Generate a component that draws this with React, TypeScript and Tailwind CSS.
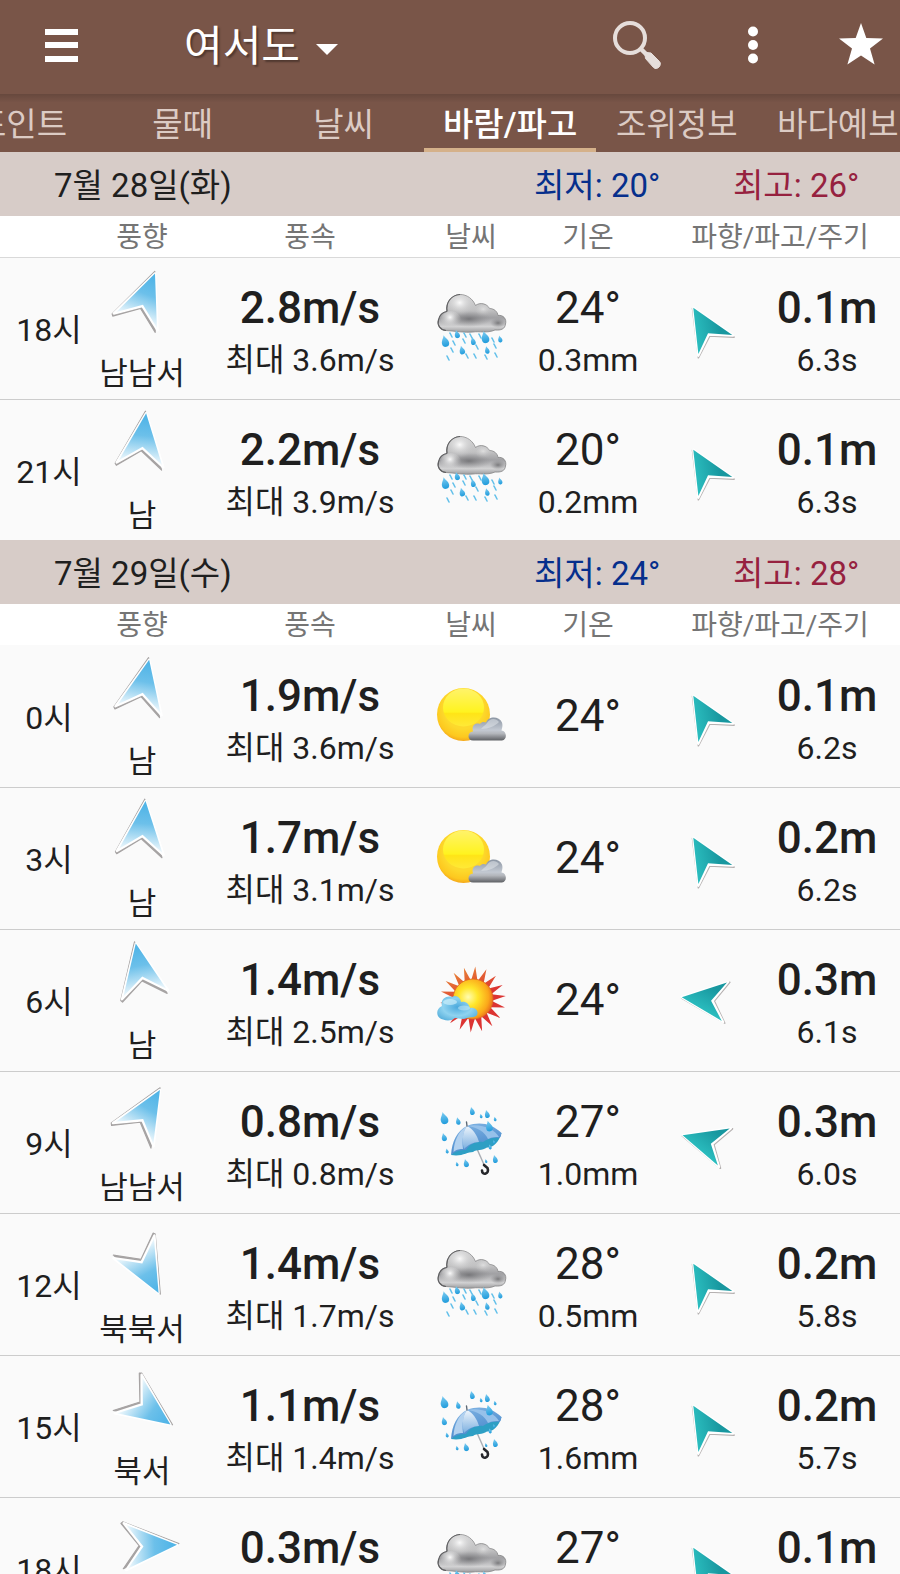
import React from "react";
import clsx from "clsx";

type Weather = "rain" | "sunCloud" | "sunny" | "umbrella";

type Forecast = {
  hour: number;
  windAngle: number;
  windDir: string;
  speed: string;
  gust: string;
  weather: Weather;
  temp: number;
  rain?: string;
  waveAngle: number;
  wave: string;
  period: string;
};

type Day = { date: string; min: number; max: number; rows: Forecast[] };

const tabs = ["포인트", "물때", "날씨", "바람/파고", "조위정보", "바다예보"];

const days: Day[] = [
  {
    date: "7월 28일(화)",
    min: 20,
    max: 26,
    rows: [
      { hour: 18, windAngle: 21, windDir: "남남서", speed: "2.8", gust: "3.6", weather: "rain", temp: 24, rain: "0.3", waveAngle: -30, wave: "0.1", period: "6.3" },
      { hour: 21, windAngle: 6, windDir: "남", speed: "2.2", gust: "3.9", weather: "rain", temp: 20, rain: "0.2", waveAngle: -30, wave: "0.1", period: "6.3" },
    ],
  },
  {
    date: "7월 29일(수)",
    min: 24,
    max: 28,
    rows: [
      { hour: 0, windAngle: 11, windDir: "남", speed: "1.9", gust: "3.6", weather: "sunCloud", temp: 24, waveAngle: -30, wave: "0.1", period: "6.2" },
      { hour: 3, windAngle: 5, windDir: "남", speed: "1.7", gust: "3.1", weather: "sunCloud", temp: 24, waveAngle: -30, wave: "0.2", period: "6.2" },
      { hour: 6, windAngle: -11, windDir: "남", speed: "1.4", gust: "2.5", weather: "sunny", temp: 24, waveAngle: -83, wave: "0.3", period: "6.1" },
      { hour: 9, windAngle: 30, windDir: "남남서", speed: "0.8", gust: "0.8", weather: "umbrella", temp: 27, rain: "1.0", waveAngle: -73, wave: "0.3", period: "6.0" },
      { hour: 12, windAngle: 151, windDir: "북북서", speed: "1.4", gust: "1.7", weather: "rain", temp: 28, rain: "0.5", waveAngle: -30, wave: "0.2", period: "5.8" },
      { hour: 15, windAngle: 125, windDir: "북서", speed: "1.1", gust: "1.4", weather: "umbrella", temp: 28, rain: "1.6", waveAngle: -30, wave: "0.2", period: "5.7" },
      { hour: 18, windAngle: 87, windDir: "서", speed: "0.3", gust: "0.9", weather: "rain", temp: 27, rain: "0.4", waveAngle: -30, wave: "0.1", period: "5.6" },
    ],
  },
];

// gradients shared by all the icons
const Gradients = () => (
  <svg className="absolute h-0 w-0" aria-hidden="true">
    <defs>
      <linearGradient id="wind" x1="0" y1="0" x2="0" y2="1">
        <stop offset="0.1" stopColor="#52b5e7" />
        <stop offset="0.45" stopColor="#6cc0ea" />
        <stop offset="1" stopColor="#f4fafd" />
      </linearGradient>
      <linearGradient id="wave" x1="0" y1="0.3" x2="1" y2="0.7">
        <stop offset="0.2" stopColor="#2cc0c1" />
        <stop offset="0.85" stopColor="#18979f" />
      </linearGradient>
      <linearGradient id="cloud" x1="0" y1="0" x2="0" y2="1">
        <stop offset="0" stopColor="#d4d4d5" />
        <stop offset="0.4" stopColor="#c2c2c3" />
        <stop offset="0.62" stopColor="#a0a0a3" />
        <stop offset="0.85" stopColor="#d2d2d3" />
        <stop offset="1" stopColor="#9b9b9d" />
      </linearGradient>
      <radialGradient id="puff" cx="0.45" cy="0.35" r="0.6">
        <stop offset="0" stopColor="#fafafa" />
        <stop offset="1" stopColor="#c2c2c3" stopOpacity="0" />
      </radialGradient>
      <radialGradient id="shade">
        <stop offset="0" stopColor="#68686b" />
        <stop offset="1" stopColor="#8a8a8c" stopOpacity="0" />
      </radialGradient>
      <linearGradient id="drop" x1="0" y1="0" x2="0" y2="1">
        <stop offset="0" stopColor="#7fcdf2" />
        <stop offset="1" stopColor="#1f9bdb" />
      </linearGradient>
      <radialGradient id="disc" cx="0.5" cy="0.4" r="0.62">
        <stop offset="0.6" stopColor="#fdd92c" />
        <stop offset="0.85" stopColor="#fdc81f" />
        <stop offset="1" stopColor="#f2a01a" />
      </radialGradient>
      <linearGradient id="gloss" x1="0" y1="0" x2="0" y2="1">
        <stop offset="0" stopColor="#fff36a" />
        <stop offset="0.62" stopColor="#fff31f" />
        <stop offset="0.66" stopColor="#ffe417" />
        <stop offset="1" stopColor="#ffe937" />
      </linearGradient>
      <linearGradient id="steel" x1="0" y1="0" x2="0" y2="1">
        <stop offset="0" stopColor="#8b95a3" />
        <stop offset="0.55" stopColor="#c3c9d2" />
        <stop offset="0.7" stopColor="#b3b6bb" />
        <stop offset="1" stopColor="#5e6064" />
      </linearGradient>
      <linearGradient id="ray" gradientUnits="userSpaceOnUse" x1="20" y1="0" x2="50" y2="60">
        <stop offset="0" stopColor="#ea9236" />
        <stop offset="0.6" stopColor="#dc3432" />
      </linearGradient>
      <radialGradient id="core" cx="0.38" cy="0.45" r="0.68">
        <stop offset="0" stopColor="#fffcb0" />
        <stop offset="0.35" stopColor="#ffe62b" />
        <stop offset="0.75" stopColor="#fba71a" />
        <stop offset="1" stopColor="#e35a1c" />
      </radialGradient>
      <radialGradient id="sky" cx="0.5" cy="0.45" r="0.6">
        <stop offset="0" stopColor="#4ba9dd" />
        <stop offset="0.6" stopColor="#8fd3f0" />
        <stop offset="1" stopColor="#5fb4de" />
      </radialGradient>
      <linearGradient id="canopy" x1="0" y1="0" x2="0.4" y2="1">
        <stop offset="0" stopColor="#84b6e4" />
        <stop offset="1" stopColor="#4687cb" />
      </linearGradient>
      <linearGradient id="panel" x1="0" y1="0" x2="0" y2="1">
        <stop offset="0" stopColor="#eef5fc" />
        <stop offset="1" stopColor="#7db0e0" />
      </linearGradient>
    </defs>
  </svg>
);

const WindArrow = ({ angle }: { angle: number }) => (
  <svg className="mx-auto block size-[72px] overflow-visible" viewBox="-38 -38 76 76" aria-hidden="true">
    <g transform={`rotate(${angle})`} strokeLinejoin="round">
      <path d="M-0.5 -39 L-26.5 19 L-25 21 L-0.5 3 L23 21 Z" fill="#a6a3a3" stroke="#a6a3a3" strokeWidth="1.2" />
      <path d="M0.5 -37 L-25 18 L0.5 0 L24.5 18 Z" fill="#fff" stroke="#fff" strokeWidth="2.6" />
      <path d="M0.5 -37 L-23 15.5 L0.5 -1.5 L23 16 Z" fill="url(#wind)" />
    </g>
  </svg>
);

const WaveArrow = ({ angle }: { angle: number }) => (
  <svg className="mx-auto block size-[60px] overflow-visible" viewBox="-32 -32 64 64" aria-hidden="true">
    <g transform={`rotate(${angle})`} strokeLinejoin="round">
      <path d="M-1 -25 L-22 24 L0 10 L22 24 Z" fill="#b5b1b1" stroke="#b5b1b1" strokeWidth="1.6" />
      <path d="M0 -25 L-21 22 L0 8 L22 22 Z" fill="#fff" stroke="#fff" strokeWidth="2.6" />
      <path d="M0 -25 L-20 20.5 L0 6.5 L21.5 21 Z" fill="url(#wave)" />
    </g>
  </svg>
);

const Drops = ({ items }: { items: number[][] }) => (
  <>
    {items.map(([x, y, s]) => (
      <path
        key={`${x}-${y}`}
        transform={`translate(${x} ${y}) rotate(-14) scale(${s})`}
        d="M0 -5 C1 -2 3 -1 3 2 C3 4 1.6 5 0 5 C-1.6 5 -3 4 -3 2 C-3 -1 -1 -2 0 -5 Z"
        fill="url(#drop)"
      />
    ))}
  </>
);

const Dashes = ({ items }: { items: number[][] }) => (
  <>
    {items.map(([x, y]) => (
      <path key={`${x}-${y}`} d={`M${x - 1} ${y - 2} l2 4`} stroke="#63c0ea" strokeWidth="1.6" strokeLinecap="round" />
    ))}
  </>
);

const rainCloud = "M11 38.5 C5 38 2 33 3.5 28 C4.5 23 8 20 12 19.5 C10.5 11 16 3 25 2.5 C32 2.5 38 7 40.5 13.5 C45 10 52 11.5 54.5 16.5 C59 16.5 62.5 19.5 63 23.5 C68 22.5 72 27 70.5 32 C70 37 66 38.5 60 38 C52 41.5 44 39 38 40 C30 41 20 39 11 38.5 Z";

const RainIcon = () => (
  <>
    <path d={rainCloud} fill="url(#cloud)" stroke="#858587" strokeWidth="0.8" />
    <path d="M12 19.5 C10.5 11 16 3 25 2.5 M11 38.5 C5 38 2 33 3.5 28 C4.5 23 8 20 12 19.5" fill="none" stroke="#5f5f61" strokeWidth="1.2" />
    <ellipse cx="34" cy="27" rx="22" ry="8" fill="url(#shade)" opacity="0.75" />
    <ellipse cx="63" cy="31" rx="8" ry="5" fill="url(#shade)" opacity="0.8" />
    <ellipse cx="16" cy="28" rx="10" ry="9" fill="url(#puff)" />
    <ellipse cx="26" cy="14" rx="13" ry="11" fill="url(#puff)" />
    <ellipse cx="49" cy="19" rx="8" ry="6" fill="url(#puff)" opacity="0.5" />
    <Drops items={[[10, 49, 1.2], [22, 42, 0.85], [38, 49, 0.8], [50, 45, 1.25], [65, 47, 0.7], [27, 58, 0.9], [52, 58, 0.75]]} />
    <Dashes items={[[16, 43], [30, 43], [19, 51], [29, 49], [36, 44], [58, 48], [17, 58], [13, 66], [32, 64], [42, 55], [40, 64], [51, 65], [61, 63], [60, 54], [45, 44]]} />
  </>
);

const SunCloudIcon = () => (
  <>
    <circle cx="28.5" cy="34.5" r="26.5" fill="url(#disc)" />
    <ellipse cx="28.5" cy="27.5" rx="20.5" ry="19" fill="url(#gloss)" />
    <path
      d="M38 60.5 C32 60.5 32 52 38 51.5 C36 45 41 42.5 45 44 C47 41 50 42 51 42.5 C53 36 64 35.5 67 42.5 C68 46 67 48 66.5 50.5 C72 51 72.5 60 67 60.5 Z"
      fill="url(#steel)"
    />
    <path d="M52 43 C55 38 61 38 64 42 C60 46 54 49 46 49 C48 46 50 46 52 43 Z" fill="#e6e9ee" opacity="0.5" />
  </>
);

// tips of the 18 rays, going round the disc
const rays = Array.from({ length: 18 }, (_, i) => {
  const a = ((i * 20 + 4) * Math.PI) / 180;
  const point = (r: number, t: number) => `${38 + r * Math.sin(t)} ${35.5 - r * Math.cos(t)}`;
  return `M${point(33, a)} L${point(19, a - 0.17)} L${point(19, a + 0.17)} Z`;
}).join(" ");

const SunnyIcon = () => (
  <>
    <path d={rays} fill="url(#ray)" />
    <circle cx="38" cy="35" r="20" fill="url(#core)" stroke="#df6a1d" strokeWidth="0.8" />
    <path
      d="M8 55.5 C1 54 0 45 7 42 C5 36 11 31 17 33 C21 30 26 34 26 38 C31 37 34 40 35 44 C40 43 44 47 42 51 C40 54 35 53 32 54 C28 56 24 54 20 54 C16 57 12 57 8 55.5 Z"
      fill="url(#sky)"
    />
    <ellipse cx="15" cy="38" rx="7" ry="3" fill="#c9ecf9" opacity="0.7" />
    <ellipse cx="29" cy="44" rx="6" ry="2.5" fill="#c9ecf9" opacity="0.5" />
  </>
);

const UmbrellaIcon = () => (
  <>
    <path d="M39 36 L50 61" stroke="#a9adb3" strokeWidth="1.4" />
    <path d="M49 59 L52.5 62 C55 68 47 70 47 64.500" fill="none" stroke="#26272b" strokeWidth="2.600" strokeLinecap="round" />
    <path d="M16 49 C26 37 46 29 66.500 27 C64 36 58 42 52 41.500 C47 45 42 43 38 46 C32 46 27 51 16 49 Z" fill="#2e9fc4" />
    <path d="M16 49 C17 35 22 25 32 20 C45 15 57 18 66.500 27 C66 29 66 31 64.500 32 C58 31 52 33 48 36 C40 35 34 39 31 44 C26 44 20 45 16 49 Z" fill="url(#canopy)" />
    <path d="M32 20 C23 25 19 36 18.500 46 C22 43 25 43 28 43 C27 34 28 26 32 20 Z" fill="#b2d1ef" />
    <path d="M32 20 C27 27 27 36 29 43 C33 39 38 36 44 36 C42 29 38 23 32 20 Z" fill="url(#panel)" />
    <path d="M32 20 C42 21 50 26 53 33 C57 31 61 31 64 31 C60 23 46 17 32 20 Z" fill="#96c1ea" />
    <path d="M32 20 L31.500 16" stroke="#5d6976" strokeWidth="1.400" strokeLinecap="round" />
    <Drops items={[[9, 12, 1.25], [37, 5, 0.8], [52, 8, 0.8], [23, 15, 0.75], [60, 13, 0.45], [46, 10, 0.45], [9, 31, 0.85], [54, 20, 1.1], [12, 45, 0.5], [31, 57, 0.85], [22, 58, 0.45], [60, 53, 0.8], [55, 41, 0.5], [51, 55, 0.4], [59, 36, 0.35]]} />
  </>
);

const icons: Record<Weather, { label: string; Icon: () => React.JSX.Element }> = {
  rain: { label: "비", Icon: RainIcon },
  sunCloud: { label: "구름조금", Icon: SunCloudIcon },
  sunny: { label: "맑음", Icon: SunnyIcon },
  umbrella: { label: "소나기", Icon: UmbrellaIcon },
};

const WeatherIcon = ({ type }: { type: Weather }) => {
  const { label, Icon } = icons[type];
  return (
    <svg className="mx-auto block size-[72px]" viewBox="0 0 72 72" role="img" aria-label={label}>
      <Icon />
    </svg>
  );
};

const Header = () => (
  <header className="flex h-[94px] shrink-0 items-center bg-[#795548] pr-[17px] pb-1 pl-[45px] text-white">
    <button type="button" aria-label="메뉴" className="mr-[106px]">
      <svg className="block h-[33px] w-[33px]" viewBox="0 0 33 33" fill="currentColor">
        <path d="M0 0h33v6H0z M0 13h33v6H0z M0 27h33v6H0z" />
      </svg>
    </button>
    <div className="flex items-center gap-4">
      <select
        aria-label="지역"
        className="appearance-none bg-transparent pt-1 text-[42px] leading-[60px] text-white outline-none [text-shadow:2px_2px_2px_rgb(0_0_0/0.35)]"
      >
        <option>여서도</option>
      </select>
      <svg className="pointer-events-none mt-2 block h-[11px] w-[22px]" viewBox="0 0 22 11" fill="currentColor" aria-hidden="true">
        <path d="M0 0h22L11 11z" />
      </svg>
    </div>
    <div className="ml-auto flex items-center gap-16">
      <button type="button" aria-label="검색" className="mr-1.5">
        <svg className="block size-12" viewBox="0 0 48 48" fill="none" stroke="#e6dedb" aria-hidden="true">
          <circle cx="17" cy="17" r="15" strokeWidth="4" />
          <path d="M28 28l6 6" strokeWidth="4.5" />
          <path d="M32.5 37.5 L32 33.5 L34 31.5 L38 32 L46.5 40.5 C49.5 44 44 50 40.5 46.5 Z" fill="#e6dedb" strokeWidth="1" strokeLinejoin="round" />
        </svg>
      </button>
      <button type="button" aria-label="더보기">
        <svg className="block size-11" viewBox="0 0 44 44" fill="currentColor">
          <circle cx="22" cy="8.5" r="5" />
          <circle cx="22" cy="22" r="5" />
          <circle cx="22" cy="35.5" r="5" />
        </svg>
      </button>
      <button type="button" aria-label="즐겨찾기">
        <svg className="block size-11" viewBox="0 0 44 44" fill="currentColor">
          <path d="M22 0 L27.3 15 L44 15.5 L31 25.5 L35.6 41.5 L22 32.6 L8.4 41.5 L13 25.5 L0 15.5 L16.7 15 Z" />
        </svg>
      </button>
    </div>
  </header>
);

const TabBar = () => (
  <nav className="h-[58px] shrink-0 overflow-hidden bg-[#795548] bg-linear-to-b from-black/15 to-transparent to-15%">
    <div className="-ml-[59px] flex h-full">
      {tabs.map((tab) => (
        <a
          key={tab}
          href="#"
          className={clsx(
            "flex h-full min-w-[161px] shrink-0 items-center justify-center border-b-4 px-[19px] pt-2 text-[33px] leading-10",
            tab === "바람/파고" ? "border-[#d5b18a] font-medium text-white" : "border-transparent text-[#dccbc4]"
          )}
        >
          {tab}
        </a>
      ))}
    </div>
  </nav>
);

const Value = ({ main, sub, strong }: { main: string; sub?: string; strong?: boolean }) => (
  <div className={clsx(sub && "pt-2")}>
    <div className={clsx("text-[44px] leading-[56px]", strong && "font-medium")}>{main}</div>
    {sub && <div className="text-[32px] leading-[48px]">{sub}</div>}
  </div>
);

const DaySection = ({ day, lined }: { day: Day; lined: boolean }) => (
  <section>
    <div className="flex h-16 items-center bg-[#d7ccc8] pt-1 pl-[54px] text-[33px] leading-10">
      <h2 className="flex-1">{day.date}</h2>
      <p className="w-[199px] text-[#062f8c]">최저: {day.min}°</p>
      <p className="w-[167px] text-[#96213f]">최고: {day.max}°</p>
    </div>
    <table className="w-full table-fixed border-collapse text-center">
      <colgroup>
        <col className="w-[90px]" />
        <col className="w-[104px]" />
        <col className="w-[232px]" />
        <col className="w-[90px]" />
        <col className="w-[144px]" />
        <col className="w-[90px]" />
        <col className="w-[150px]" />
      </colgroup>
      <thead>
        <tr
          className={clsx(
            "h-[41px] border-b bg-white text-[28px] leading-9 text-[#757575] *:p-0 *:pt-1 *:font-normal",
            lined ? "border-[#d9d9d9]" : "border-[#fafafa]"
          )}
        >
          <th aria-label="시간" />
          <th>풍향</th>
          <th>풍속</th>
          <th>날씨</th>
          <th>기온</th>
          <th colSpan={2} className="whitespace-nowrap">파향/파고/주기</th>
        </tr>
      </thead>
      <tbody>
        {day.rows.map((row) => (
          <tr key={row.hour} className="h-[142px] border-b border-[#cccccc] whitespace-nowrap *:p-0 last:h-[141px] last:border-b-0">
            <th scope="row" className="text-[32px] font-normal">
              <div className="pt-1 pl-2">{row.hour}시</div>
            </th>
            <td className="align-top">
              <div className="flex flex-col gap-3 pt-3 text-[31px] leading-10">
                <WindArrow angle={row.windAngle} />
                <span>{row.windDir}</span>
              </div>
            </td>
            <td>
              <Value main={`${row.speed}m/s`} sub={`최대 ${row.gust}m/s`} strong />
            </td>
            <td>
              <WeatherIcon type={row.weather} />
            </td>
            <td>
              <Value main={`${row.temp}°`} sub={row.rain && `${row.rain}mm`} />
            </td>
            <td>
              <WaveArrow angle={row.waveAngle} />
            </td>
            <td>
              <div className="pl-1">
                <Value main={`${row.wave}m`} sub={`${row.period}s`} strong />
              </div>
            </td>
          </tr>
        ))}
      </tbody>
    </table>
  </section>
);

export default function App() {
  return (
    <div className="flex h-screen flex-col overflow-hidden bg-[#fafafa] font-[Roboto,'Noto_Sans_CJK_KR',sans-serif] text-[#1f1f1f]">
      <Gradients />
      <Header />
      <TabBar />
      <main className="min-h-0 flex-1 overflow-y-auto [scrollbar-width:none]">
        {days.map((day, i) => (
          <DaySection key={day.date} day={day} lined={i === 0} />
        ))}
      </main>
    </div>
  );
}
